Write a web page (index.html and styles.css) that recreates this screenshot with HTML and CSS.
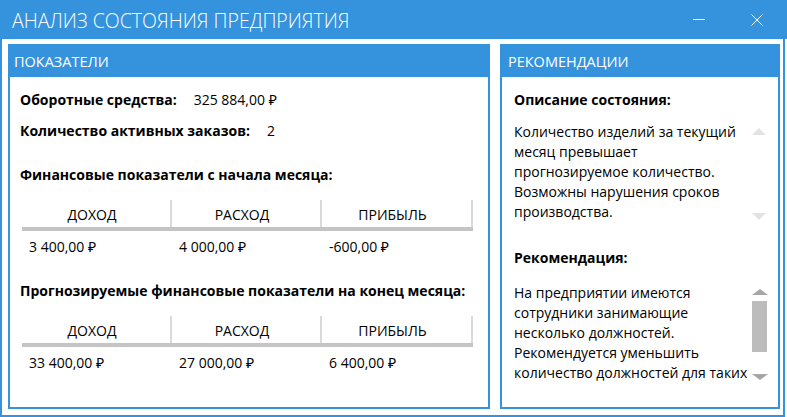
FILE: index.html
```html
<!DOCTYPE html>
<html lang="ru">
<head>
<meta charset="utf-8">
<title>Анализ состояния предприятия</title>
<link rel="stylesheet" href="styles.css">
</head>
<body>
<div class="window">
  <header class="titlebar">
    <span class="title">АНАЛИЗ СОСТОЯНИЯ ПРЕДПРИЯТИЯ</span>
    <div class="controls">
      <span class="btn-min"></span>
      <svg class="btn-close" width="12" height="12" viewBox="0 0 12 12"><path d="M0.5 0.5 L11.5 11.5 M11.5 0.5 L0.5 11.5" stroke="#fff" stroke-width="1" fill="none"/></svg>
    </div>
  </header>
  <main class="content">
    <section class="panel panel-left">
      <div class="panel-header">ПОКАЗАТЕЛИ</div>
      <div class="panel-body">
        <div class="row"><span class="label">Оборотные средства:</span><span class="value">325 884,00 ₽</span></div>
        <div class="row row-second"><span class="label">Количество активных заказов:</span><span class="value">2</span></div>
        <div class="section-title">Финансовые показатели с начала месяца:</div>
        <div class="table">
          <div class="thead">
            <div class="th">ДОХОД</div>
            <div class="th">РАСХОД</div>
            <div class="th">ПРИБЫЛЬ</div>
          </div>
          <div class="bar"></div>
          <div class="tr">
            <div class="td">3 400,00 ₽</div>
            <div class="td">4 000,00 ₽</div>
            <div class="td">-600,00 ₽</div>
          </div>
        </div>
        <div class="section-title section-title-2">Прогнозируемые финансовые показатели на конец месяца:</div>
        <div class="table">
          <div class="thead">
            <div class="th">ДОХОД</div>
            <div class="th">РАСХОД</div>
            <div class="th">ПРИБЫЛЬ</div>
          </div>
          <div class="bar"></div>
          <div class="tr">
            <div class="td">33 400,00 ₽</div>
            <div class="td">27 000,00 ₽</div>
            <div class="td">6 400,00 ₽</div>
          </div>
        </div>
      </div>
    </section>
    <section class="panel panel-right">
      <div class="panel-header panel-header-right">РЕКОМЕНДАЦИИ</div>
      <div class="panel-body panel-body-right">
        <div class="label-line">Описание состояния:</div>
        <div class="textbox textbox-desc">
          <div class="text">Количество изделий за текущий<br>месяц превышает<br>прогнозируемое количество.<br>Возможны нарушения сроков<br>производства.</div>
          <div class="scroll scroll-disabled">
            <svg class="arrow" width="14" height="7" viewBox="0 0 14 7"><polygon points="7,0 14,7 0,7" fill="#e3e3e3"/></svg>
            <svg class="arrow" width="14" height="7" viewBox="0 0 14 7"><polygon points="0,0 14,0 7,7" fill="#e3e3e3"/></svg>
          </div>
        </div>
        <div class="label-line label-rec">Рекомендация:</div>
        <div class="textbox textbox-rec">
          <div class="text">На предприятии имеются<br>сотрудники занимающие<br>несколько должностей.<br>Рекомендуется уменьшить<br>количество должностей для таких</div>
          <div class="scroll scroll-active">
            <svg class="arrow" width="16" height="6" viewBox="0 0 16 6"><polygon points="8,0 16,6 0,6" fill="#a6a6a6"/></svg>
            <div class="thumb"></div>
            <svg class="arrow arrow-down" width="16" height="6" viewBox="0 0 16 6"><polygon points="0,0 16,0 8,6" fill="#a6a6a6"/></svg>
          </div>
        </div>
      </div>
    </section>
  </main>
</div>
</body>
</html>
```
FILE: styles.css
```css
html, body {
  margin: 0;
  padding: 0;
  background: #ffffff;
}
body {
  width: 787px;
  height: 417px;
  overflow: hidden;
  font-family: "Open Sans", "Noto Sans", sans-serif;
  color: #000;
}
.window {
  width: 787px;
  height: 417px;
  display: flex;
  flex-direction: column;
}
.titlebar {
  height: 39px;
  box-sizing: border-box;
  padding: 2px 24px 0 12px;
  background: #3592dc;
  color: #fff;
  display: flex;
  align-items: center;
}
.title {
  font-size: 19.5px;
  font-weight: 300;
  white-space: nowrap;
}
.controls {
  margin-left: auto;
  display: flex;
  align-items: center;
  gap: 46px;
  height: 39px;
  margin-top: -2px;
}
.btn-min {
  width: 12px;
  height: 1px;
  background: #fff;
}
.btn-close {
  display: block;
  margin-top: 1px;
}
.content {
  flex: 1;
  width: 785px;
  box-sizing: border-box;
  border: 2px solid #3592dc;
  border-top: 0;
  padding: 5px 3px 6px 6px;
  display: flex;
  gap: 10px;
}
.panel {
  border: 2px solid #3592dc;
  display: flex;
  flex-direction: column;
  box-sizing: border-box;
}
.panel-left {
  width: 482px;
}
.panel-right {
  width: 280px;
}
.panel-header {
  height: 31px;
  line-height: 31px;
  background: #3592dc;
  color: #fff;
  font-size: 14.5px;
  padding-left: 4px;
  white-space: nowrap;
}
.panel-header-right {
  padding-left: 6px;
}
.panel-body {
  padding: 13px 0 0 10px;
  font-size: 14px;
}
.panel-body-right {
  padding-left: 12px;
}
.row {
  display: flex;
  height: 20px;
  line-height: 20px;
  white-space: nowrap;
}
.row-second {
  margin-top: 11px;
}
.label {
  font-weight: 700;
}
.value {
  margin-left: 17px;
}
.section-title {
  margin-top: 24px;
  height: 20px;
  line-height: 20px;
  font-weight: 700;
  white-space: nowrap;
}
.table {
  margin: 15px 0 0 2px;
  width: 451px;
}
.thead, .tr {
  display: grid;
  grid-template-columns: 150px 150px 151px;
}
.th {
  height: 27px;
  box-sizing: border-box;
  padding: 3px 8px 0 0;
  line-height: 24px;
  font-size: 14px;
  text-align: center;
  border-right: 2px solid #dadada;
  white-space: nowrap;
}
.bar {
  height: 4px;
  background: #c4c4c4;
}
.tr {
  margin-top: 6px;
}
.td {
  padding-left: 7px;
  height: 20px;
  line-height: 20px;
  white-space: nowrap;
}
.label-line {
  height: 20px;
  line-height: 20px;
  font-weight: 700;
}
.label-rec {
  margin-top: 26px;
}
.textbox {
  display: flex;
  height: 100px;
  margin-top: 12px;
}
.textbox-rec {
  margin-top: 15px;
}
.text {
  width: 236px;
  height: 100px;
  overflow: hidden;
  font-size: 14px;
  line-height: 20px;
  white-space: nowrap;
}
.scroll {
  width: 17px;
  display: flex;
  flex-direction: column;
  align-items: center;
  box-sizing: border-box;
}
.scroll-disabled {
  justify-content: space-between;
  padding: 6px 0 2px 0;
}
.scroll-active {
  padding: 6px 0 0 0;
  margin-left: 1px;
}
.arrow {
  display: block;
}
.thumb {
  width: 15px;
  height: 51px;
  margin-top: 6px;
  background: #bcbcbc;
}
.arrow-down {
  margin-top: 22px;
}
```
